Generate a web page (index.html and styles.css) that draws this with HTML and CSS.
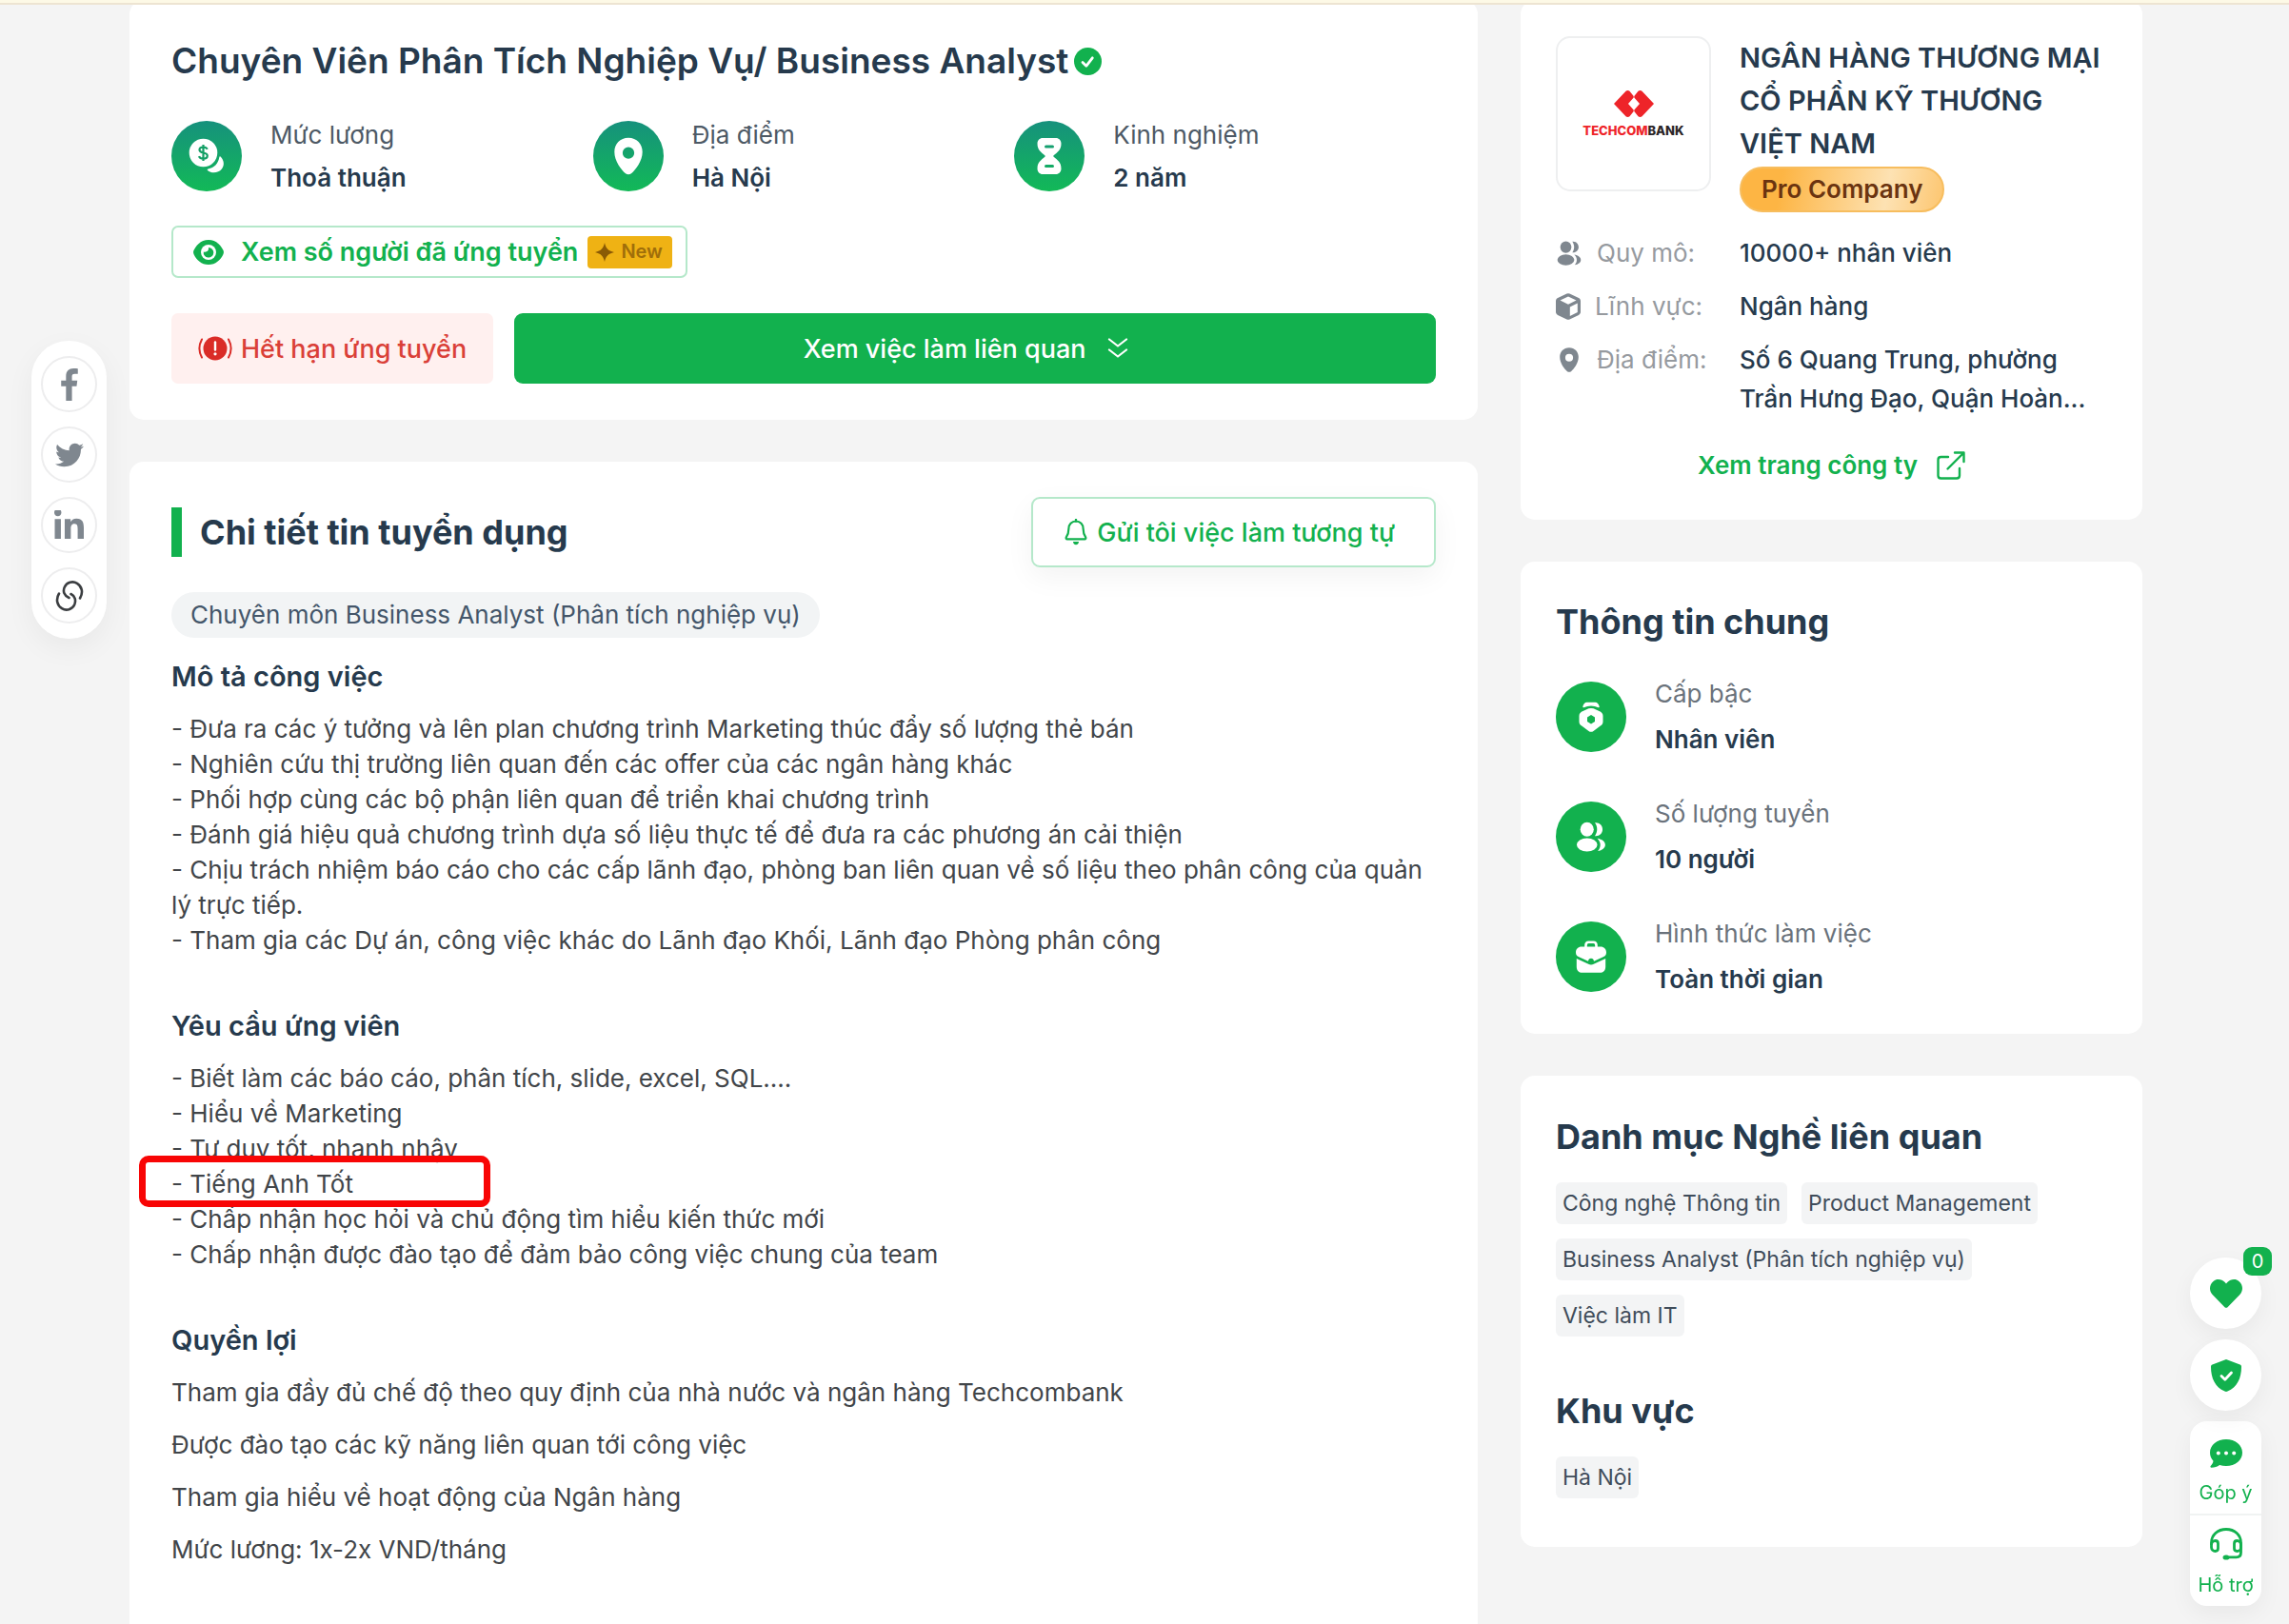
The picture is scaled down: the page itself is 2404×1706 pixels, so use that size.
FILE: index.html
```html
<!DOCTYPE html>
<html lang="vi">
<head>
<meta charset="utf-8">
<meta name="viewport" content="width=device-width, initial-scale=1">
<title>Chuyên Viên Phân Tích Nghiệp Vụ/ Business Analyst</title>
<link rel="stylesheet" href="styles.css">
</head>
<body>
<svg class="sprite" aria-hidden="true">
  <defs>
    <symbol id="i-pin" viewBox="0 0 24 24"><path fill-rule="evenodd" d="M12 1C7 1 3.600 4.700 3.600 9.400c0 5.600 4.200 11 6.700 13 1 .8 2.400.8 3.400 0 2.500-2 6.700-7.400 6.700-13C20.400 4.700 17 1 12 1zm0 5.600a3.500 3.500 0 1 1 0 7 3.500 3.500 0 0 1 0-7z"/></symbol>
    <symbol id="i-users" viewBox="0 0 24 24"><ellipse cx="9" cy="6.500" rx="5" ry="5.300"/><ellipse cx="9" cy="18" rx="7.600" ry="5"/><path d="M14.800 1.600c3.300-.4 5.700 1.900 5.700 4.900s-2.400 5.300-5.700 4.900c2.200-2.900 2.200-6.900 0-9.800z"/><path d="M16.600 13.300c3.400.5 5.900 2.400 5.900 4.700 0 2.300-2.300 4.100-5.500 4.600 2.600-2.700 2.500-6.600-.4-9.300z"/></symbol>
  </defs>
</svg>

<div class="topbar"></div>

<nav class="share" aria-label="Chia sẻ">
  <a class="share-link" href="#" aria-label="Facebook"><svg width="34" height="34" viewBox="-124 0 512 512"><path d="M76.700 512V283H0v-91h76.700v-71.700C76.700 42.400 124.300 0 193.800 0c33.300 0 61.900 2.500 70.200 3.600V85h-48.200c-37.800 0-45.100 18-45.100 44.300V192H256l-11.700 91h-73.600v229"/></svg></a>
  <a class="share-link" href="#" aria-label="Twitter"><svg width="30" height="30" viewBox="0 0 512 512"><path d="M459.370 151.716c.325 4.548.325 9.097.325 13.645 0 138.720-105.583 298.558-298.558 298.558-59.452 0-114.680-17.219-161.137-47.106 8.447.974 16.568 1.299 25.340 1.299 49.055 0 94.213-16.568 130.274-44.832-46.132-.975-84.792-31.188-98.112-72.772 6.498.974 12.995 1.624 19.818 1.624 9.421 0 18.843-1.300 27.614-3.573-48.081-9.747-84.143-51.980-84.143-102.985v-1.299c13.969 7.797 30.214 12.670 47.431 13.319-28.264-18.843-46.781-51.005-46.781-87.391 0-19.492 5.197-37.360 14.294-52.954 51.655 63.675 129.300 105.258 216.365 109.807-1.624-7.797-2.599-15.918-2.599-24.040 0-57.828 46.782-104.934 104.934-104.934 30.213 0 57.502 12.670 76.670 33.137 23.715-4.548 46.456-13.320 66.599-25.340-7.798 24.366-24.366 44.833-46.132 57.827 21.117-2.273 41.584-8.122 60.426-16.243-14.292 20.791-32.161 39.308-52.628 54.253z"/></svg></a>
  <a class="share-link" href="#" aria-label="LinkedIn"><svg width="31" height="31" viewBox="0 16 448 448"><path d="M100.280 448H7.400V148.900h92.880zM53.790 108.100C24.090 108.100 0 83.500 0 53.800a53.790 53.790 0 0 1 107.580 0c0 29.700-24.100 54.300-53.790 54.300zM447.900 448h-92.680V302.400c0-34.700-.7-79.200-48.290-79.200-48.290 0-55.690 37.700-55.690 76.700V448h-92.780V148.900h89.080v40.800h1.300c12.400-23.500 42.690-48.300 87.880-48.300 94 0 111.280 61.900 111.280 142.300V448z"/></svg></a>
  <a class="share-link" href="#" aria-label="Sao chép liên kết"><svg width="32" height="32" viewBox="0 0 32 32" fill="none" stroke="#3b3e41" stroke-width="2.600" stroke-linecap="round"><path d="M15.500 18c-5-2-6.800-6.800-4.700-11.300 2.300-5 8.500-6.800 13.200-3.900 5 3 6.700 9.500 3 15.700"/><path d="M17.500 14c4.200 2 5.600 6.800 3.700 11.300-2.300 5-8.500 6.800-13.200 3.900-5-3-6.700-9.500-3-15.700"/></svg></a>
</nav>

<main class="page">
  <div class="col col-main">
    <section class="card job">
      <h1 class="job-title">Chuyên Viên Phân Tích Nghiệp Vụ/ Business Analyst
        <svg class="verified" width="29" height="29" viewBox="0 0 29 29"><circle cx="14.500" cy="14.500" r="14.500" fill="#12b14e"/><path d="M9 15.500l3.800 3.800 6.500-8.500" fill="none" stroke="#fff" stroke-width="2.800" stroke-linecap="round" stroke-linejoin="round"/></svg>
      </h1>
      <div class="facts">
        <div class="fact">
          <span class="disc disc-fade"><svg width="38" height="38" viewBox="0 0 38 38"><circle cx="15.500" cy="15.500" r="14.800" fill="#fff"/><path d="M33.500 19.500c4.200 4.200 4.200 9.500 1.400 13-3.500 4.300-10.500 5.300-14.900 1.400-.6-.6-.2-1.400.6-1.500 6.500-1.200 10.500-5.500 11.700-12.200.1-.9.700-1.200 1.200-.7z" fill="#fff"/><path d="M19.800 11.800c-.8-1.700-2.300-2.300-4.300-2.300-2.400 0-4 1.200-4 3 0 4.200 8.300 1.800 8.300 6 0 1.900-1.800 3.200-4.300 3.200-2.100 0-3.800-.8-4.500-2.600M15.500 7v17" fill="none" stroke="#149f66" stroke-width="2.200"/></svg></span>
          <div class="pair"><span class="fact-label">Mức lương</span><span class="fact-value">Thoả thuận</span></div>
        </div>
        <div class="fact">
          <span class="disc disc-fade"><svg width="42" height="42" fill="#fff"><use href="#i-pin"/></svg></span>
          <div class="pair"><span class="fact-label">Địa điểm</span><span class="fact-value">Hà Nội</span></div>
        </div>
        <div class="fact">
          <span class="disc disc-fade"><svg width="26" height="38" viewBox="0 0 26 38"><path fill="#fff" fill-rule="evenodd" d="M6 0h14c3 0 5.500 2.400 5.500 5.800 0 7-3.500 8.500-8.500 13.200 5 4.700 8.500 6.200 8.500 13.200 0 3.400-2.500 5.800-5.500 5.800H6c-3 0-5.500-2.400-5.500-5.800C.5 25.200 4 23.700 9 19 4 14.300.5 12.800.5 5.800.5 2.400 3 0 6 0zm3.500 7.500a1.500 1.500 0 0 0 0 3h7a1.500 1.500 0 0 0 0-3zm0 20.500a1.500 1.500 0 0 0 0 3h7a1.500 1.500 0 0 0 0-3z"/></svg></span>
          <div class="pair"><span class="fact-label">Kinh nghiệm</span><span class="fact-value">2 năm</span></div>
        </div>
      </div>
      <button class="btn-viewers" type="button">
        <svg width="32" height="26" viewBox="0 0 32 26"><path fill="#12b14e" d="M16 0C8.500 0 3.500 5 .6 10.800c-.7 1.400-.7 3 0 4.400C3.500 21 8.500 26 16 26s12.500-5 15.400-10.800c.7-1.400.7-3 0-4.400C28.500 5 23.500 0 16 0z"/><circle cx="16" cy="13" r="8" fill="#fff"/><path fill="#12b14e" d="M16 8a5.300 5.300 0 1 1-5.200 4.400c2.900 1.100 5.800-1 5.200-4.400z"/></svg>
        <span>Xem số người đã ứng tuyển</span>
        <span class="new-tag"><svg width="20" height="20" viewBox="0 0 20 20"><path fill="#8a5a05" d="M10 0c1.300 5.500 3.500 8.500 10 10-6.500 1.500-8.700 4.500-10 10-1.300-5.500-3.500-8.500-10-10 6.500-1.500 8.700-4.500 10-10z"/></svg>New</span>
      </button>
      <div class="actions">
        <div class="expired">
          <svg width="36" height="26" viewBox="0 0 36 26"><circle cx="18" cy="13" r="12.500" fill="#da2c27"/><path d="M18 6.500v8" stroke="#fff" stroke-width="2.400" stroke-linecap="round"/><circle cx="18" cy="18.800" r="1.600" fill="#fff"/><path d="M4 3.500c-3.300 6-3.300 13 0 19M32 3.500c3.300 6 3.300 13 0 19" fill="none" stroke="#da2c27" stroke-width="2" stroke-linecap="round"/></svg>
          <span>Hết hạn ứng tuyển</span>
        </div>
        <button class="btn-related" type="button">
          <span>Xem việc làm liên quan</span>
          <svg width="22" height="22" viewBox="0 0 22 22" fill="none" stroke="#fff" stroke-width="2.200" stroke-linecap="round" stroke-linejoin="round"><path d="M2 1.500l9 7 9-7M2 12.500l9 7 9-7"/></svg>
        </button>
      </div>
    </section>

    <section class="card detail">
      <div class="detail-head">
        <h2 class="detail-title">Chi tiết tin tuyển dụng</h2>
        <button class="btn-alert" type="button">
          <svg width="24" height="28" viewBox="0 0 24 28"><path d="M12 2.500c-4.500 0-7.600 3.300-7.600 7.700 0 4.600-1 6.800-2.600 9.200-.5.800 0 1.900 1 1.900h18.400c1 0 1.500-1.100 1-1.900-1.600-2.400-2.600-4.600-2.600-9.200 0-4.400-3.100-7.700-7.600-7.700z" fill="none" stroke="#12b14e" stroke-width="2.200"/><path d="M12 .8v2" stroke="#12b14e" stroke-width="2.200" stroke-linecap="round"/><path d="M9 24h6c0 2-1.200 3.200-3 3.200S9 26 9 24z" fill="#12b14e"/></svg>
          <span>Gửi tôi việc làm tương tự</span>
        </button>
      </div>
      <span class="major">Chuyên môn Business Analyst (Phân tích nghiệp vụ)</span>

      <div class="block">
        <h3 class="block-title">Mô tả công việc</h3>
        <p class="lines">- Đưa ra các ý tưởng và lên plan chương trình Marketing thúc đẩy số lượng thẻ bán<br>
        - Nghiên cứu thị trường liên quan đến các offer của các ngân hàng khác<br>
        - Phối hợp cùng các bộ phận liên quan để triển khai chương trình<br>
        - Đánh giá hiệu quả chương trình dựa số liệu thực tế để đưa ra các phương án cải thiện<br>
        - Chịu trách nhiệm báo cáo cho các cấp lãnh đạo, phòng ban liên quan về số liệu theo phân công của quản lý trực tiếp.<br>
        - Tham gia các Dự án, công việc khác do Lãnh đạo Khối, Lãnh đạo Phòng phân công</p>
      </div>

      <div class="block">
        <h3 class="block-title">Yêu cầu ứng viên</h3>
        <p class="lines">- Biết làm các báo cáo, phân tích, slide, excel, SQL....<br>
        - Hiểu về Marketing<br>
        - Tư duy tốt, nhanh nhậy<br>
        <span class="marked">- Tiếng Anh Tốt</span><br>
        - Chấp nhận học hỏi và chủ động tìm hiểu kiến thức mới<br>
        - Chấp nhận được đào tạo để đảm bảo công việc chung của team</p>
      </div>

      <div class="block benefits">
        <h3 class="block-title">Quyền lợi</h3>
        <p>Tham gia đầy đủ chế độ theo quy định của nhà nước và ngân hàng Techcombank</p>
        <p>Được đào tạo các kỹ năng liên quan tới công việc</p>
        <p>Tham gia hiểu về hoạt động của Ngân hàng</p>
        <p>Mức lương: 1x-2x VND/tháng</p>
      </div>
    </section>
  </div>

  <aside class="col col-side">
    <section class="card company">
      <div class="company-top">
        <a class="logo" href="#" aria-label="Techcombank">
          <svg width="42" height="28" viewBox="0 0 42 28"><path fill="#ee2429" d="M0 14L12.500.8C13.500-.2 15.500-.2 16.500.8L20.700 6v1.500L15 14l5.700 6.500V22l-4.200 5.200c-1 1-3 1-4 0zM42 14L29.500.8c-1-1-3-1-4 0L21.300 6v1.500L27 14l-5.700 6.500V22l4.200 5.200c1 1 3 1 4 0z"/></svg>
          <span class="logo-text"><span class="logo-red">TECHCOM</span>BANK</span>
        </a>
        <div class="company-id">
          <h2 class="company-name">NGÂN HÀNG THƯƠNG MẠI CỔ PHẦN KỸ THƯƠNG VIỆT NAM</h2>
          <span class="pro">Pro Company</span>
        </div>
      </div>
      <dl class="company-facts">
        <dt><svg width="28" height="28"><use href="#i-users"/></svg>Quy mô:</dt>
        <dd>10000+ nhân viên</dd>
        <dt><svg width="26" height="28" viewBox="0 0 26 28"><path fill-rule="evenodd" d="M11.500.6a3.500 3.500 0 0 1 3 0l9.500 4.500c1.200.6 2 1.800 2 3.100v11.600c0 1.300-.8 2.500-2 3.100l-9.500 4.500a3.500 3.500 0 0 1-3 0L2 22.900c-1.200-.6-2-1.800-2-3.100V8.200c0-1.300.8-2.500 2-3.100zM13 3.500L4.500 7.600 13 11.700l8.500-4.100zM14.800 14.500v9.500l8-3.900v-9.500z"/></svg>Lĩnh vực:</dt>
        <dd>Ngân hàng</dd>
        <dt><svg width="28" height="28"><use href="#i-pin"/></svg>Địa điểm:</dt>
        <dd>Số 6 Quang Trung, phường<br>Trần Hưng Đạo, Quận Hoàn...</dd>
      </dl>
      <a class="company-link" href="#">Xem trang công ty
        <svg width="30" height="30" viewBox="0 0 30 30" fill="none" stroke="#12b14e" stroke-width="2.400" stroke-linecap="round" stroke-linejoin="round"><path d="M12 6H4.500C2.800 6 1.500 7.200 1.500 9v16.500c0 1.800 1.300 3 3 3H21c1.700 0 3-1.200 3-3V18"/><path d="M11.500 18.500L28 2M19 1.500h9.500V11"/></svg>
      </a>
    </section>

    <section class="card general">
      <h2 class="side-title">Thông tin chung</h2>
      <div class="general-list">
        <div class="fact">
          <span class="disc"><svg width="26" height="32" viewBox="0 0 26 32"><path d="M5 5.500C6 2 7 1.400 8.500 1.400h9c1.500 0 2.500.6 3.500 4.100-5-2.300-11-2.300-16 0z" fill="#fff" stroke="#fff" stroke-width="1.500" stroke-linejoin="round"/><path fill="#fff" fill-rule="evenodd" d="M10.500 7.300a9 9 0 0 1 5 0l6 2.600c2.300.9 4 2.600 4 5v6c0 2.100-1 3.600-2.700 4.700l-7.300 5.300a4.300 4.300 0 0 1-5 0l-7.300-5.300C1.500 24.500.5 23 .5 20.900v-6c0-2.400 1.700-4.100 4-5zM13 14l-4 2.400v4.700l4 2.400 4-2.400v-4.700z"/></svg></span>
          <div class="pair"><span class="fact-label">Cấp bậc</span><span class="fact-value">Nhân viên</span></div>
        </div>
        <div class="fact">
          <span class="disc"><svg width="34" height="34" fill="#fff"><use href="#i-users"/></svg></span>
          <div class="pair"><span class="fact-label">Số lượng tuyển</span><span class="fact-value">10 người</span></div>
        </div>
        <div class="fact">
          <span class="disc"><svg width="32" height="34" viewBox="0 0 32 34"><path d="M10.500 8V5c0-2 1.200-3.300 3-3.300h5c1.800 0 3 1.300 3 3.300v3" fill="none" stroke="#fff" stroke-width="2.600"/><path fill="#fff" d="M6 6.500h20c3.500 0 6 2.500 6 6 0 2.500-1 3.700-3.300 4.800L19 21.800c-.2-1.800-1.300-3-3-3s-2.800 1.200-3 3l-9.700-4.500C1 16.200 0 15 0 12.500c0-3.500 2.500-6 6-6z"/><path fill="#fff" d="M.8 19l12.500 5.800c1.700.9 3.700.9 5.400 0L31.200 19v8.500c0 3.800-2.300 6.300-6 6.300H6.800c-3.700 0-6-2.500-6-6.300z"/></svg></span>
          <div class="pair"><span class="fact-label">Hình thức làm việc</span><span class="fact-value">Toàn thời gian</span></div>
        </div>
      </div>
    </section>

    <section class="card related">
      <h2 class="side-title">Danh mục Nghề liên quan</h2>
      <div class="tags">
        <a class="tag" href="#">Công nghệ Thông tin</a>
        <a class="tag" href="#">Product Management</a>
        <a class="tag" href="#">Business Analyst (Phân tích nghiệp vụ)</a>
        <a class="tag" href="#">Việc làm IT</a>
      </div>
      <h2 class="side-title area-title">Khu vực</h2>
      <div class="tags">
        <a class="tag" href="#">Hà Nội</a>
      </div>
    </section>
  </aside>
</main>

<div class="dock">
  <button class="dock-round" type="button" aria-label="Việc đã lưu">
    <svg width="34" height="34" viewBox="0 0 512 512" fill="#12b14e"><path d="M462.300 62.600C407.500 15.900 326 24.300 275.700 76.200L256 96.500l-19.700-20.300C186.100 24.300 104.500 15.900 49.700 62.600c-62.800 53.600-66.100 149.800-9.900 207.900l193.500 199.800c12.500 12.900 32.800 12.900 45.300 0l193.500-199.800c56.300-58.100 53-154.300-9.800-207.900z"/></svg>
    <span class="dock-count">0</span>
  </button>
  <button class="dock-round" type="button" aria-label="An toàn">
    <svg width="32" height="34" viewBox="0 0 32 34"><path fill="#12b14e" d="M16 0l14.500 5.500c.9.300 1.500 1.200 1.500 2.200C32 20 27.500 29 17.500 33.600c-1 .5-2 .5-3 0C4.500 29 0 20 0 7.700c0-1 .6-1.900 1.500-2.200z"/><path d="M11 17.500l3.800 3.800 6.700-7.300" fill="none" stroke="#fff" stroke-width="2.800" stroke-linecap="round" stroke-linejoin="round"/></svg>
  </button>
  <div class="dock-box">
    <button class="dock-item" type="button">
      <svg width="34" height="30" viewBox="0 0 34 30"><path fill="#12b14e" d="M17 0C7.500 0 0 6 0 14c0 3.500 1.300 6.300 3.500 8.700-.3 2-1.300 3.700-2.800 5.300-.7.700-.2 1.700.8 1.700 3.300 0 6.200-1 8.600-2.800 2.100.7 4.400 1.100 6.900 1.100 9.500 0 17-6 17-14S26.500 0 17 0z"/><g fill="#fff"><circle cx="8.800" cy="14.500" r="2"/><circle cx="17" cy="14.500" r="2"/><circle cx="25.200" cy="14.500" r="2"/></g></svg>
      <span>Góp ý</span>
    </button>
    <button class="dock-item" type="button">
      <svg width="34" height="34" viewBox="0 0 34 34" fill="none" stroke="#12b14e" stroke-width="2.800"><path d="M1.500 18v-2.500C1.500 7.500 8 1.500 17 1.500s15.500 6 15.500 14V26c0 3-1.800 4.800-4.800 4.800H20"/><path d="M5.500 13.500c1.800 0 3 1.200 3 3v5c0 1.800-1.200 3-3 3s-4-1.500-4-4V18c0-2.800 2-4.500 4-4.500zM28.500 13.500c-1.800 0-3 1.200-3 3v5c0 1.800 1.200 3 3 3s4-1.500 4-4V18c0-2.800-2-4.500-4-4.500z"/><ellipse cx="17" cy="31" rx="3.500" ry="2.600" fill="#12b14e" stroke="none"/></svg>
      <span>Hỗ trợ</span>
    </button>
  </div>
</div>
</body>
</html>
```

FILE: styles.css
```css
*, *::before, *::after { box-sizing: border-box; }

:root {
  --green: #12b14e;
  --ink: #263a4d;
  --muted: #4d5965;
}

body {
  margin: 0;
  background: #f4f4f4;
  color: var(--ink);
  font-family: Inter, "Liberation Sans", sans-serif;
  font-size: 26px;
  line-height: 37px;
}

h1, h2, h3, p, dl, dd { margin: 0; }
a { color: inherit; text-decoration: none; }
button { font: inherit; color: inherit; border: 0; padding: 0; cursor: pointer; }
svg { display: block; flex: none; }
.sprite { position: absolute; width: 0; height: 0; }

.topbar {
  position: fixed;
  inset: 0 0 auto 0;
  z-index: 5;
  height: 5px;
  background: #fdf9e6;
  border-bottom: 2px solid #ede4d2;
}

/* Page columns */
.page {
  display: grid;
  grid-template-columns: 1416fr 653fr;
  gap: 45px;
  min-height: 100vh;
  padding: 0 154px 0 136px;
}
.col { display: flex; flex-direction: column; gap: 44px; min-width: 0; }
.card { background: #fff; border-radius: 15px; }

/* Job header */
.job { padding: 42px 44px 38px; }
.job-title {
  display: flex;
  align-items: center;
  gap: 6px;
  font-size: 37px;
  font-weight: 600;
  line-height: 44px;
}
.facts { display: grid; grid-template-columns: repeat(3, 1fr); margin-top: 37px; }
.fact { display: flex; align-items: center; gap: 30px; }
.disc {
  display: flex;
  align-items: center;
  justify-content: center;
  flex: none;
  width: 74px;
  height: 74px;
  border-radius: 50%;
  background: var(--green);
}
.disc-fade { background: linear-gradient(180deg, #16917c, #12b957); }
.pair { display: flex; flex-direction: column; gap: 8px; }
.fact-label { color: var(--muted); }
.fact-value { font-weight: 600; }

.btn-viewers {
  display: flex;
  align-items: center;
  gap: 18px;
  height: 55px;
  margin-top: 32px;
  padding: 0 14px 0 21px;
  border: 2px solid #b5e8ca;
  border-radius: 7px;
  background: #fff;
  color: var(--green);
  font-size: 27px;
  font-weight: 600;
}
.new-tag {
  display: flex;
  align-items: center;
  gap: 7px;
  height: 34px;
  margin-left: -8px;
  padding: 0 10px 0 8px;
  border-radius: 4px;
  background: #efb214;
  color: #a06e0a;
  font-size: 20px;
}
.actions { display: flex; gap: 22px; margin-top: 37px; }
.expired {
  display: flex;
  align-items: center;
  gap: 9px;
  height: 74px;
  padding: 0 28px;
  border-radius: 7px;
  background: #fff0ef;
  color: #da4038;
  font-size: 27px;
  font-weight: 500;
}
.btn-related {
  display: flex;
  align-items: center;
  justify-content: center;
  gap: 22px;
  flex: 1;
  padding-right: 20px;
  border-radius: 9px;
  background: var(--green);
  color: #fff;
  font-size: 27px;
  font-weight: 500;
}

/* Job detail */
.detail { flex: 1; padding: 37px 44px; border-radius: 15px 15px 0 0; }
.detail-head { display: flex; align-items: center; justify-content: space-between; }
.detail-title {
  padding-left: 19px;
  border-left: 11px solid var(--green);
  font-size: 36px;
  font-weight: 700;
  line-height: 52px;
}
.btn-alert {
  display: flex;
  align-items: center;
  justify-content: center;
  gap: 10px;
  height: 74px;
  padding: 0 41px 0 33px;
  border: 2px solid #b5e8ca;
  border-radius: 9px;
  background: #fff;
  box-shadow: 0 10px 30px rgba(0, 0, 0, 0.05);
  color: var(--green);
  font-size: 27px;
  font-weight: 500;
}
.major {
  display: inline-block;
  margin-top: 26px;
  padding: 0 20px;
  border-radius: 24px;
  background: #f2f4f5;
  color: #44566a;
  line-height: 48px;
}
.block { margin-top: 53px; color: #414549; }
.major + .block { margin-top: 22px; }
.block-title { margin-bottom: 18px; color: var(--ink); font-size: 29px; font-weight: 600; line-height: 37px; }
.benefits p + p { margin-top: 18px; }

.marked { position: relative; }
.marked::after {
  content: "";
  position: absolute;
  top: -14px;
  left: -34px;
  width: 369px;
  height: 54px;
  border: 7px solid #f80505;
  border-radius: 10px;
}

/* Company */
.company { padding: 38px 37px 37px; }
.company-top { display: flex; gap: 30px; }
.logo {
  display: flex;
  flex-direction: column;
  align-items: center;
  justify-content: center;
  gap: 6px;
  flex: none;
  width: 163px;
  height: 163px;
  border: 2px solid #eeeff0;
  border-radius: 15px;
}
.logo-text { color: #2b2527; font-size: 13px; font-weight: 800; line-height: 16px; }
.logo-red { color: #ee2429; }
.company-name { font-size: 29px; font-weight: 600; line-height: 45px; }
.pro {
  display: inline-block;
  margin-top: 2px;
  padding: 0 21px;
  border: 2px solid #f7bd5e;
  border-radius: 24px;
  background: linear-gradient(100deg, #fdb544 20%, #fde2b3 72%, #fdc670);
  color: #6b3410;
  font-weight: 600;
  line-height: 44px;
}
.company-facts {
  display: grid;
  grid-template-columns: 163px 1fr;
  gap: 15px 30px;
  margin-top: 22px;
  font-weight: 500;
  line-height: 41px;
}
.company-facts dt {
  display: flex;
  align-items: center;
  gap: 15px;
  height: 41px;
  fill: #7f878f;
  color: #969a9f;
  font-weight: 400;
  white-space: nowrap;
}
.company-link {
  display: flex;
  align-items: center;
  justify-content: center;
  gap: 20px;
  margin-top: 29px;
  color: var(--green);
  font-weight: 600;
  line-height: 41px;
}

/* General info */
.side-title { font-size: 36px; font-weight: 700; line-height: 44px; }
.general { padding: 41px 37px 39px; }
.general-list { display: flex; flex-direction: column; gap: 41px; margin-top: 35px; }
.general .pair { gap: 11px; }
.general .fact-label { color: #6a727b; }

/* Related categories */
.related { padding: 42px 37px 51px; }
.tags { display: flex; flex-wrap: wrap; gap: 15px; margin-top: 26px; }
.tag {
  padding: 0 7px;
  border-radius: 6px;
  background: #f3f4f5;
  color: #3f4c5a;
  font-size: 23px;
  line-height: 44px;
}
.area-title { margin-top: 56px; }

/* Floating share rail */
.share {
  position: fixed;
  top: 358px;
  left: 33px;
  display: flex;
  flex-direction: column;
  gap: 15px;
  padding: 16px 10px;
  border-radius: 39px;
  background: #fff;
  box-shadow: 0 10px 30px rgba(0, 0, 0, 0.05);
}
.share-link {
  display: flex;
  align-items: center;
  justify-content: center;
  width: 59px;
  height: 59px;
  border: 2px solid #ededee;
  border-radius: 50%;
  fill: #7f878f;
}

/* Floating dock */
.dock {
  position: fixed;
  right: 29px;
  bottom: 19px;
  display: flex;
  flex-direction: column;
  gap: 11px;
  color: var(--green);
  font-size: 20px;
  line-height: 28px;
}
.dock-round, .dock-box { background: #fff; box-shadow: 0 8px 24px rgba(0, 0, 0, 0.05); }
.dock-round {
  position: relative;
  display: flex;
  align-items: center;
  justify-content: center;
  width: 75px;
  height: 75px;
  border-radius: 50%;
}
.dock-count {
  position: absolute;
  top: -11px;
  right: -11px;
  width: 30px;
  border-radius: 9px;
  background: var(--green);
  color: #fff;
  line-height: 30px;
}
.dock-box { width: 75px; border-radius: 18px; overflow: hidden; }
.dock-item {
  display: flex;
  flex-direction: column;
  align-items: center;
  justify-content: flex-end;
  gap: 12px;
  width: 100%;
  height: 97px;
  padding-bottom: 8px;
  background: none;
}
.dock-item + .dock-item { border-top: 2px solid #f0f3f2; }
```
